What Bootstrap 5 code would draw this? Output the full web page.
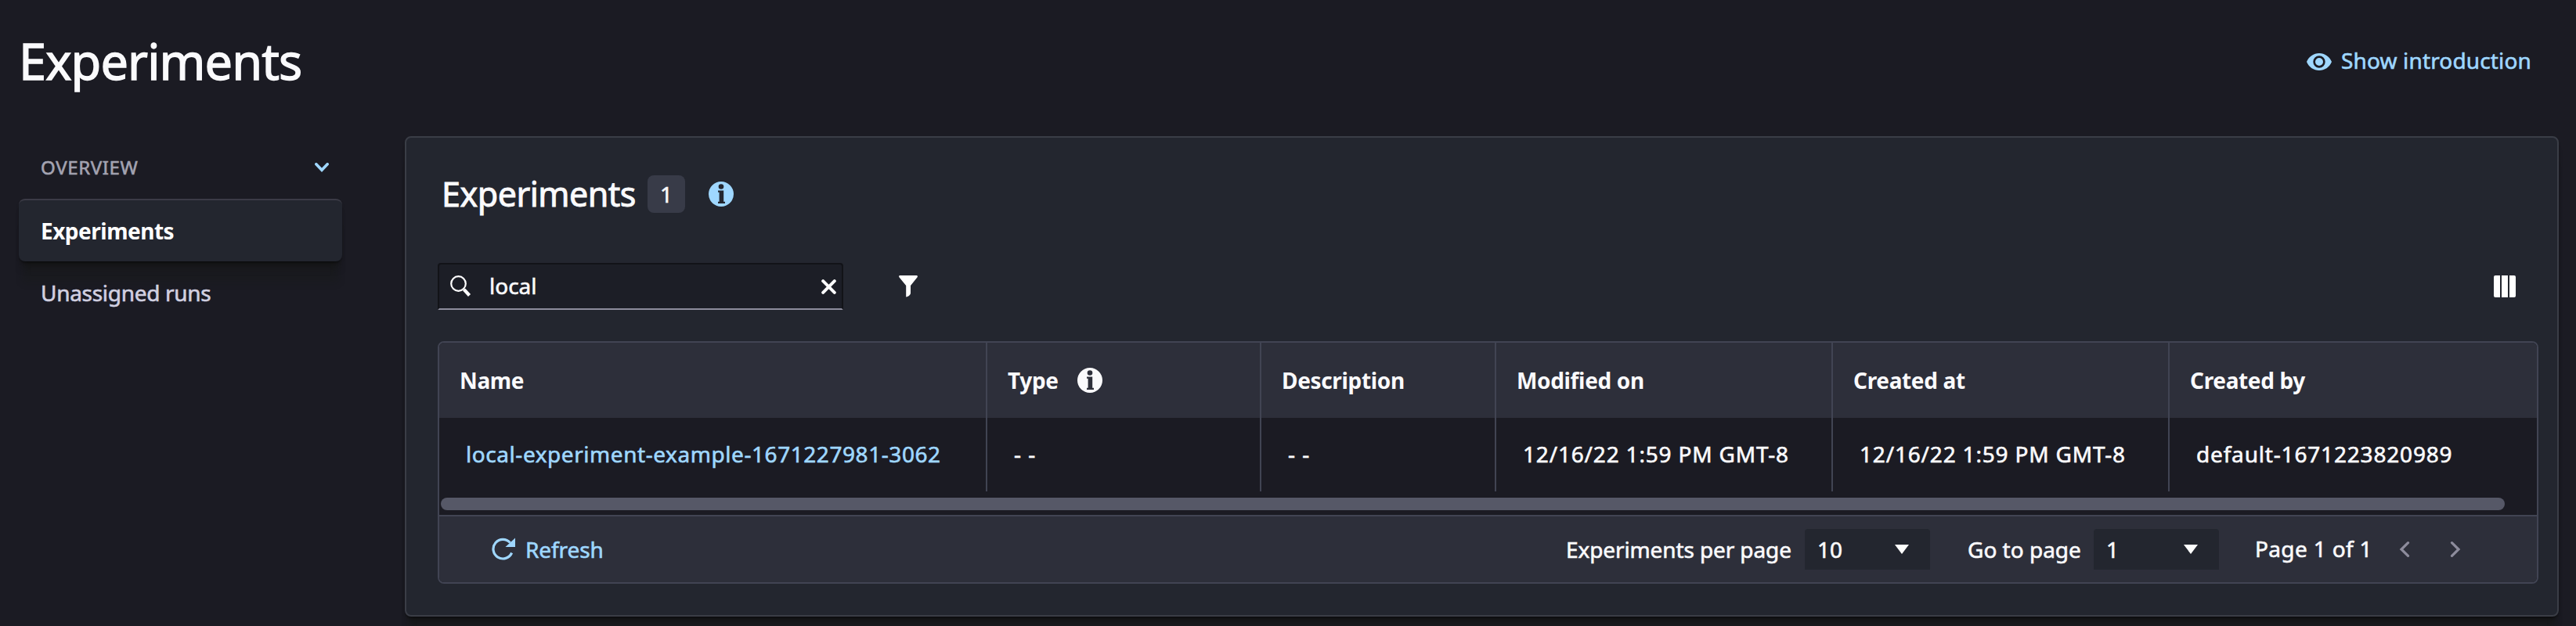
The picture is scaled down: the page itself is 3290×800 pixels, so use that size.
<!DOCTYPE html>
<html lang="en">
<head>
<meta charset="utf-8">
<title>Experiments</title>
<link href="https://cdn.jsdelivr.net/npm/bootstrap@5.3.0/dist/css/bootstrap.min.css" rel="stylesheet">
<style>
  body { background: #1b1b23; color: #fafafc; font-family: "Noto Sans", sans-serif; font-size: 28px; line-height: 40px; min-height: 800px; overflow: hidden; -webkit-text-stroke: .6px currentColor; }
  a, .tone-blue { color: #9fd7ff; }
  svg { display: block; flex: none; }
  .page-head { height: 174px; padding: 0 56px 0 24px; }
  .page-title { font-size: 63px; line-height: 84px; margin: 36px 0 0; font-weight: 400; letter-spacing: -.9px; -webkit-text-stroke-width: 1.3px; }
  .intro-link { margin-top: 57px; }
  .intro-link span { width: 244px; margin-left: 12px; letter-spacing: .15px; }
  .side { width: 413px; margin-left: 24px; }
  .side > * { height: 80px; padding: 0 17px 0 28px; }
  .side-head { color: #a3a3b1; font-size: 24px; letter-spacing: .65px; }
  .side-link { color: #d1d0e0; letter-spacing: -.3px; }
  .side-link.active { color: #fff; font-weight: 700; letter-spacing: -.5px; background: #23262f; border-top: 2px solid #3b3b46; border-radius: 8px; -webkit-text-stroke: 0; }
  .lifted { box-shadow: 0 3px 4px -2px rgba(0,0,0,.7), 0 14px 8px -5px rgba(20,20,20,.55), 0 32px 8px -5px rgba(24,27,24,.3); }
  .panel { width: 2751px; height: 614px; margin-left: 80px; padding: 48px 24px 0 40px; background: #23262f; border: 2px solid #3a3d46; border-radius: 8px; }
  .panel-title { font-size: 43px; font-weight: 400; line-height: 48px; letter-spacing: -.49px; width: 268px; margin: 0; padding-left: 5px; -webkit-text-stroke-width: .9px; }
  .count { width: 48px; height: 48px; border-radius: 8px; background: #383b48; margin-right: 30px; }
  .toolbar { height: 60px; margin: 64px 0 40px; }
  .search { width: 518px; height: 60px; background: #1c1e26; border: 2px solid #121318; border-bottom-color: #8d8c9c; border-radius: 4px 4px 0 0; padding: 0 7px 0 14px; }
  .search span { padding: 0 0 2px 22px; }
  .grid { border: 2px solid #414453; border-radius: 8px; width: 2683px; height: 310px; overflow: hidden; background: #1b1b23; }
  .grid table { table-layout: fixed; border-collapse: separate; border-spacing: 0; width: 2679px; }
  .grid th { height: 96px; background: #2d2f3a; padding: 0 0 0 26px; letter-spacing: -.34px; -webkit-text-stroke: 0; }
  .grid td { height: 94px; padding: 0 0 2px 34px; white-space: nowrap; }
  .grid th + th, .grid td + td { border-left: 2px solid #414453; }
  .grid th + th { padding-left: 26px; }
  .grid .when { letter-spacing: .82px; padding-left: 34px; }
  .track { height: 30px; padding: 8px 0 0 2px; }
  .thumb { width: 2636px; height: 16px; border-radius: 8px; background: #565867; }
  .foot { height: 86px; border-top: 2px solid #414453; background: #2d2f3a; padding: 0 97px 0 67px; }
  .pick { height: 52px; background: #23262f; border-radius: 4px 4px 0 0; padding: 0 27px 0 16px; }
</style>
</head>
<body>
<header class="page-head d-flex align-items-start justify-content-between">
  <h1 class="page-title">Experiments</h1>
  <a href="#" class="intro-link d-flex align-items-center text-decoration-none text-nowrap">
    <svg class="mt-1" width="32" height="32" viewBox="0 0 32 32"><path fill="currentColor" fill-rule="evenodd" d="M16 5C9 5 3 9 0 16c3 7 9 11 16 11s13-4 16-11C29 9 23 5 16 5zm0 3.300a7.700 7.700 0 1 1 0 15.400a7.700 7.700 0 0 1 0-15.400zm0 2.700a5 5 0 1 0 0 10a5 5 0 0 0 0-10z"/></svg>
    <span>Show introduction</span>
  </a>
</header>
<main class="d-flex align-items-start">
  <nav class="side nav flex-column flex-shrink-0">
    <div class="side-head d-flex align-items-center justify-content-between">OVERVIEW
      <svg class="tone-blue" width="18" height="12" viewBox="0 0 18 12"><path d="M1.800 1.800L9 9.300l7.200-7.500" fill="none" stroke="currentColor" stroke-width="3.600" stroke-linecap="round"/></svg>
    </div>
    <a href="#" class="side-link active lifted d-flex align-items-center text-decoration-none">Experiments</a>
    <a href="#" class="side-link d-flex align-items-center text-decoration-none">Unassigned runs</a>
  </nav>
  <section class="panel lifted flex-shrink-0">
    <div class="d-flex align-items-center">
      <h2 class="panel-title">Experiments</h2>
      <span class="count d-flex align-items-center justify-content-center">1</span>
      <svg class="tone-blue" width="32" height="32" viewBox="0 0 32 32"><circle cx="16" cy="16" r="16" fill="currentColor"/><circle cx="16" cy="6.500" r="3.300" fill="#23262f"/><path fill="#23262f" d="M12 11.500h7.200v14.300H21V28h-9v-2.200h1.600V13.700H12z"/></svg>
    </div>
    <div class="toolbar d-flex align-items-center justify-content-between">
      <div class="d-flex align-items-center">
        <div class="search d-flex align-items-center">
          <svg width="28" height="28" viewBox="0 0 28 28"><circle cx="10.500" cy="10.500" r="9.300" fill="none" stroke="#fff" stroke-width="2.200"/><path d="M17.500 18l2 2 5 5.500" fill="none" stroke="#fff" stroke-width="4.200"/></svg>
          <span class="flex-grow-1">local</span>
          <svg width="19" height="19" viewBox="0 0 19 19"><path d="M2.200 2.200l14.600 14.600M16.800 2.200L2.200 16.800" stroke="#fff" stroke-width="4" stroke-linecap="round"/></svg>
        </div>
        <svg style="margin-left:71px" width="24" height="28" viewBox="0 0 24 28"><path fill="#fff" d="M1.500 0h21C24 0 24.300 1.500 23.400 2.600L15 13v9.500c0 2-2.200 4.500-5.800 5V13L.600 2.600C-.300 1.500 0 0 1.500 0z"/></svg>
      </div>
      <svg style="margin-right:29px" width="28" height="28" viewBox="0 0 28 28" fill="#fff"><path d="M2 0h6v28H2a2 2 0 0 1-2-2V2a2 2 0 0 1 2-2zM10 0h8v28h-8zM20 0h6a2 2 0 0 1 2 2v24a2 2 0 0 1-2 2h-6z"/></svg>
    </div>
    <div class="grid">
      <table>
        <colgroup><col width="698"><col width="350"><col width="300"><col width="430"><col width="430"><col></colgroup>
        <thead><tr>
          <th>Name</th>
          <th><div class="d-flex align-items-center"><span style="width:89px">Type</span><svg width="32" height="32" viewBox="0 0 32 32"><circle cx="16" cy="16" r="16" fill="#fafafc"/><circle cx="16" cy="6.500" r="3.300" fill="#2d2f3a"/><path fill="#2d2f3a" d="M12 11.500h7.200v14.300H21V28h-9v-2.200h1.600V13.700H12z"/></svg></div></th>
          <th>Description</th>
          <th>Modified on</th>
          <th>Created at</th>
          <th>Created by</th>
        </tr></thead>
        <tbody><tr>
          <td><a href="#" class="text-decoration-none" style="letter-spacing:.56px">local-experiment-example-1671227981-3062</a></td>
          <td style="letter-spacing:1px">- -</td>
          <td style="letter-spacing:1px">- -</td>
          <td class="when">12/16/22 1:59 PM GMT-8</td>
          <td class="when">12/16/22 1:59 PM GMT-8</td>
          <td class="when">default-1671223820989</td>
        </tr></tbody>
      </table>
      <div class="track"><div class="thumb"></div></div>
      <div class="foot d-flex align-items-center text-nowrap">
        <a href="#" class="d-flex align-items-center text-decoration-none me-auto">
          <svg width="30" height="30" viewBox="0 0 30 30"><path d="M25.600 19.500A12.300 12.300 0 1 1 23.500 6.500" fill="none" stroke="currentColor" stroke-width="3.200"/><path d="M30 .500V12H17.500z" fill="currentColor"/></svg>
          <span style="margin-left:13px;letter-spacing:-.1px">Refresh</span>
        </a>
        <span style="width:305px;letter-spacing:-.11px">Experiments per page</span>
        <div class="pick d-flex align-items-center justify-content-between" style="width:160px">10 <svg width="18" height="12" viewBox="0 0 18 12"><path d="M0 0h18L9 12z" fill="#fff"/></svg></div>
        <span style="width:161px;margin-left:48px">Go to page</span>
        <div class="pick d-flex align-items-center justify-content-between" style="width:160px">1 <svg width="18" height="12" viewBox="0 0 18 12"><path d="M0 0h18L9 12z" fill="#fff"/></svg></div>
        <span style="width:184px;margin-left:46px;padding-bottom:2px;letter-spacing:.35px">Page 1 of 1</span>
        <svg width="14" height="20" viewBox="0 0 14 20"><path d="M11.500 1.700L3 10l8.500 8.300" fill="none" stroke="#8d8c9c" stroke-width="3.200" stroke-linecap="round"/></svg>
        <svg style="margin-left:51px" width="14" height="20" viewBox="0 0 14 20"><path d="M2.500 1.700L11 10l-8.500 8.300" fill="none" stroke="#8d8c9c" stroke-width="3.200" stroke-linecap="round"/></svg>
      </div>
    </div>
  </section>
</main>
<script src="https://cdn.jsdelivr.net/npm/bootstrap@5.3.0/dist/js/bootstrap.bundle.min.js"></script>
</body>
</html>
